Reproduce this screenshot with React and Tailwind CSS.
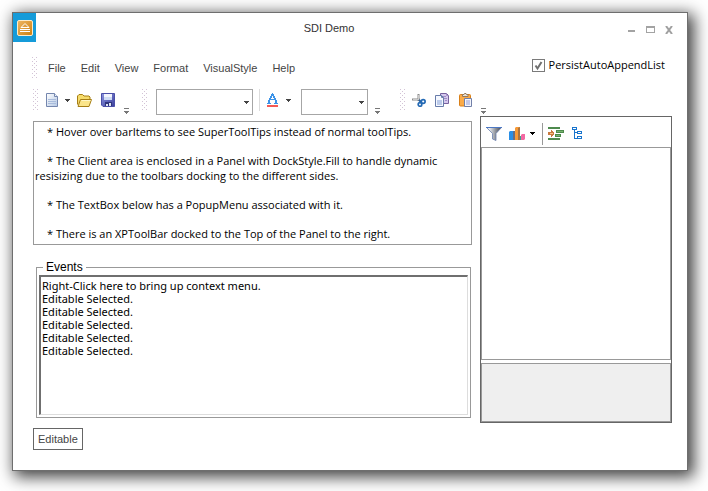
import React from "react";

const body = "font-['Open_Sans','Noto_Sans',sans-serif]";
const eventFont = "font-['Noto_Sans','Open_Sans',sans-serif]";
const menuFont = "font-['Liberation_Sans',Arial,sans-serif]";

function Grip() {
  return (
    <svg className="w-[6px] h-[22px] shrink-0" shapeRendering="crispEdges" aria-hidden="true">
      <defs>
        <pattern id="grip" width="4" height="4" patternUnits="userSpaceOnUse">
          <rect x="0" y="0" width="1" height="1" fill="#d3c3d6" />
          <rect x="2" y="2" width="1" height="1" fill="#d3c3d6" />
        </pattern>
      </defs>
      <rect width="6" height="22" fill="url(#grip)" />
    </svg>
  );
}

function Arrow({ color = "#444" }) {
  return (
    <svg width="5" height="3" viewBox="0 0 5 3" shapeRendering="crispEdges" fill={color} aria-hidden="true">
      <path d="M0 0h5v1H0zM1 1h3v1H1zM2 2h1v1H2z" />
    </svg>
  );
}

function Overflow() {
  return (
    <button type="button" aria-label="Toolbar options" className="self-end shrink-0">
      <svg width="5" height="6" viewBox="0 0 5 6" shapeRendering="crispEdges" fill="#777" className="block" aria-hidden="true">
        <path d="M0 0h5v1H0zM0 3h5v1H0zM1 4h3v1H1zM2 5h1v1H2z" />
      </svg>
    </button>
  );
}

function IconButton({ label, children, className = "" }) {
  return (
    <button type="button" aria-label={label} className={`flex shrink-0 items-center justify-center ${className}`}>
      {children}
    </button>
  );
}

function Combo({ label, className }) {
  return (
    <div className={`grid h-[22px] shrink-0 ${className}`}>
      <select aria-label={label} className="col-start-1 row-start-1 w-full appearance-none border border-[#a6a6a6] bg-white">
        <option></option>
      </select>
      <span className="pointer-events-none col-start-1 row-start-1 mr-1 self-center justify-self-end">
        <Arrow />
      </span>
    </div>
  );
}

const NewIcon = () => (
  <svg width="12" height="14" viewBox="0 0 12 14" aria-hidden="true">
    <defs>
      <linearGradient id="page" x2="1" y2="1">
        <stop offset="0" stopColor="#fff" />
        <stop offset="1" stopColor="#b5c8e4" />
      </linearGradient>
    </defs>
    <path d="M.5.5h8l3 3v10H.5z" fill="url(#page)" stroke="#7486ae" />
    <path d="M8.5.5v3h3" fill="#eef3fb" stroke="#7486ae" />
    <path d="M2 6.500h8M2 8.500h8M2 10.500h8" stroke="#a9bcdc" />
  </svg>
);

const OpenIcon = () => (
  <svg width="15" height="13" viewBox="0 0 15 13" aria-hidden="true">
    <path d="M.5 10.500V2l1.500-1.500h3.500l1.500 1.500h5l1 1v3" fill="#f6dc6c" stroke="#a67e15" />
    <path d="M1 12.500 3.500 5.500H14.500L12 12.500z" fill="#fbe58a" stroke="#a67e15" />
    <path d="M4.500 6.500h9" stroke="#fff7c7" />
  </svg>
);

const SaveIcon = () => (
  <svg width="14" height="14" viewBox="0 0 14 14" aria-hidden="true">
    <defs>
      <linearGradient id="disk" x2="1" y2="1">
        <stop offset="0" stopColor="#8c95e0" />
        <stop offset="1" stopColor="#3b3f9c" />
      </linearGradient>
    </defs>
    <path d="M.5.5h13v13H2L.5 12z" fill="url(#disk)" stroke="#4b4fa8" />
    <path d="M3 1h8v6H3z" fill="#f2f5fd" />
    <path d="M3 4h8v3H3z" fill="#cfdcf5" />
    <path d="M4 9h7v4H4z" fill="#30357c" />
    <path d="M5 11h2v2H5zM8 10h2v3H8z" fill="#dfe6f4" />
  </svg>
);

const CutIcon = () => (
  <svg width="14" height="13" viewBox="0 0 14 13" fill="none" aria-hidden="true">
    <path d="M0 5.500h8M6.500 0v7" stroke="#8b8b8b" strokeWidth="2" />
    <path d="M1 5.500h6M6.500 1v5" stroke="#c9c9c9" />
    <path d="m7 6 2 2" stroke="#235d9f" strokeWidth="2" />
    <circle cx="11.200" cy="7.500" r="1.900" stroke="#2369b4" strokeWidth="1.700" />
    <circle cx="8" cy="10.500" r="1.800" stroke="#2369b4" strokeWidth="1.700" />
  </svg>
);

const CopyIcon = () => (
  <svg width="14" height="14" viewBox="0 0 14 14" aria-hidden="true">
    <path d="M5.500.5h6l2 2v8h-8z" fill="#d5c8ed" stroke="#77619f" />
    <path d="M11.500.5v2h2M7 3.500h4M7 5.500h5M10 7.500h2" fill="none" stroke="#a28dc7" />
    <path d="M.5 2.500h6l2 2v9h-8z" fill="#f5f8ff" stroke="#687caa" />
    <path d="M6.500 2.500v2h2" fill="none" stroke="#687caa" />
    <path d="M2 7h5v5H2z" fill="#bccbea" />
  </svg>
);

const PasteIcon = () => (
  <svg width="13" height="14" viewBox="0 0 13 14" aria-hidden="true">
    <rect x=".5" y="1.500" width="11" height="11.500" rx="1" fill="#fbab48" stroke="#d87f18" />
    <path d="M3.500 3.500v-2h1.500l.5-1h1.500l.5 1H9v2z" fill="#e9e4dc" stroke="#977a58" />
    <path d="M5.500 5.500h7v8h-7z" fill="#f3f5fc" stroke="#7280a8" />
    <path d="M7 7h4v5H7z" fill="#c3c9ea" />
  </svg>
);

const FontIcon = () => (
  <svg width="11" height="14" viewBox="0 0 11 14" shapeRendering="crispEdges" fill="#3c93e8" aria-hidden="true">
    <path d="M5 0h1v1H5zM4 1h3v2H4zM3 3h2v2H3zM6 3h2v2H6zM2 5h2v2H2zM7 5h2v2H7zM3 6h5v1H3zM1 7h2v3H1zM8 7h2v3H8zM0 10h4v1H0zM7 10h4v1H7z" />
    <path d="M0 12h11v2H0z" fill="#f45a55" />
  </svg>
);

const FilterIcon = () => (
  <svg width="16" height="14" viewBox="0 0 16 14" aria-hidden="true">
    <defs>
      <linearGradient id="funnel">
        <stop offset=".2" stopColor="#e9ebef" />
        <stop offset=".6" stopColor="#8f939b" />
        <stop offset="1" stopColor="#45484f" />
      </linearGradient>
    </defs>
    <path d="M.5.5h15L10 6.500v7L6.500 12V6.500z" fill="url(#funnel)" stroke="#6a7fae" strokeWidth=".8" />
    <path d="M0 .5h16" stroke="#4c78c4" />
  </svg>
);

const ChartIcon = () => (
  <svg width="16" height="13" viewBox="0 0 16 13" aria-hidden="true">
    <path d="M0 5 1 4h4v9H0z" fill="#2a8fe6" />
    <path d="M4 4h2v9H4z" fill="#666f86" />
    <path d="M6 1 7 0h4v13H6z" fill="#f79a37" />
    <path d="M9 1l2-1v13H9z" fill="#a87443" />
    <path d="m12 8 1-1h3v5l-1 1h-3z" fill="#f268a2" />
    <path d="M11 9h1v4h-1z" fill="#3fa58c" />
  </svg>
);

const IndentIcon = () => (
  <svg width="16" height="13" viewBox="0 0 16 13" shapeRendering="crispEdges" aria-hidden="true">
    <path d="M0 0h12v2H0zM0 11h12v2H0zM8 3h8v3H8zM7 7h6v3H7z" fill="#4d8a4d" />
    <path d="M9 4h6v1H9zM8 8h4v1H8z" fill="#79b56e" />
    <path d="M0 5h3V3l3 3v1L3 10V8H0z" fill="#c9793f" />
    <path d="M2 6h3v1H2z" fill="#f7c58a" />
  </svg>
);

const TreeIcon = () => (
  <svg width="10" height="13" viewBox="0 0 10 13" fill="none" stroke="#1874cd" shapeRendering="crispEdges" aria-hidden="true">
    <path d="M.5.5h4v2h-4zM2.500 3v8.500H5M2.500 5.500H5M5.500 4.500h4v2h-4zM5.500 9.500h4v2h-4z" />
  </svg>
);

const menus = ["File", "Edit", "View", "Format", "VisualStyle", "Help"];

const events = [
  "Right-Click here to bring up context menu.",
  "Editable Selected.",
  "Editable Selected.",
  "Editable Selected.",
  "Editable Selected.",
  "Editable Selected.",
].join("\n");

function TitleBar() {
  return (
    <header className="flex h-[29px] items-stretch">
      <div className="flex w-[23px] items-center justify-center bg-[#159bd9]">
        <svg width="16" height="16" viewBox="0 0 16 16" aria-hidden="true">
          <defs>
            <linearGradient id="app" x2="1" y2="1">
              <stop offset="0" stopColor="#efb765" />
              <stop offset="1" stopColor="#cc7e0e" />
            </linearGradient>
          </defs>
          <rect x=".5" y=".5" width="15" height="15" rx="1.500" fill="url(#app)" stroke="#fdeccb" />
          <path d="M8 3.500 4 7.500h8z" fill="none" stroke="#fff" />
          <path d="M3 9.500h10M3 11.500h10" stroke="#fff" />
        </svg>
      </div>
      <h1 className={`flex-1 pr-[6px] pt-[7px] text-center text-[11px] leading-4 text-[#333] ${menuFont}`}>SDI Demo</h1>
      <div className="flex items-center gap-[10px] pr-[14px] pt-1">
        <IconButton label="Minimize">
          <svg width="8" height="8" shapeRendering="crispEdges" aria-hidden="true"><path d="M0 4h7v2H0z" fill="#a3a3a3" /></svg>
        </IconButton>
        <IconButton label="Maximize">
          <svg width="9" height="7" shapeRendering="crispEdges" aria-hidden="true"><path d="M0 0h9v7H0zM1 2v4h7V2z" fillRule="evenodd" fill="#a3a3a3" /></svg>
        </IconButton>
        <IconButton label="Close">
          <svg width="8" height="8" viewBox="0 0 8 8" aria-hidden="true"><path d="m1 0 6 8M7 0 1 8" stroke="#a0a0a0" strokeWidth="2" /></svg>
        </IconButton>
      </div>
    </header>
  );
}

export default function App() {
  return (
    <div className="flex min-h-screen flex-col bg-white pb-5 pl-3 pr-5 pt-3">
      <div className="flex flex-1 flex-col border border-[#6e6e6e] bg-white shadow-[4px_4px_15px_2px_rgba(0,0,0,0.75)]">
        <TitleBar />

        <div className="mt-[15px] flex h-[22px] items-center justify-between pl-[19px] pr-[22px]">
          <nav className={`flex items-center text-[11px] leading-4 text-[#444] ${menuFont}`}>
            <Grip />
            <div className="ml-[10px] flex gap-[15px]">
              {menus.map((m) => (
                <button key={m} type="button">{m}</button>
              ))}
            </div>
          </nav>
          <label className={`-mt-[6px] flex items-center gap-1 text-[11px] leading-4 text-black ${body}`}>
            <span className="grid">
              <input type="checkbox" defaultChecked className="peer col-start-1 row-start-1 size-[13px] appearance-none border border-[#7a7a7a] bg-white" />
              <svg width="13" height="13" viewBox="0 0 13 13" className="pointer-events-none invisible col-start-1 row-start-1 peer-checked:visible" fill="none" stroke="#707070" strokeWidth="2" aria-hidden="true">
                <path d="m3.500 6.500 2 3 4-6.500" />
              </svg>
            </span>
            PersistAutoAppendList
          </label>
        </div>

        <div className="mt-[10px] flex h-[25px] items-start pl-[20px]" role="toolbar" aria-label="Main toolbar">
          <div className="flex h-[25px]">
            <div className="flex h-[22px] items-center">
              <Grip />
              <IconButton label="New" className="ml-[7px]"><NewIcon /></IconButton>
              <IconButton label="New options" className="ml-[7px]"><Arrow /></IconButton>
              <IconButton label="Open" className="ml-[7px]"><OpenIcon /></IconButton>
              <IconButton label="Save" className="ml-[9px] mr-[9px]"><SaveIcon /></IconButton>
            </div>
            <Overflow />
          </div>
          <div className="ml-[13px] flex h-[25px]">
            <div className="flex h-[22px] items-center">
              <Grip />
              <Combo label="Font family" className="ml-[8px] w-[97px]" />
              <span className="ml-[6px] h-[22px] w-px bg-[#dcdcdc]" />
              <IconButton label="Font color" className="ml-[7px]"><FontIcon /></IconButton>
              <IconButton label="Font color options" className="ml-[8px]"><Arrow /></IconButton>
              <Combo label="Font size" className="ml-[10px] mr-[7px] w-[67px]" />
            </div>
            <Overflow />
          </div>
          <div className="ml-[20px] flex h-[25px]">
            <div className="flex h-[22px] items-center">
              <Grip />
              <IconButton label="Cut" className="ml-[6px]"><CutIcon /></IconButton>
              <IconButton label="Copy" className="ml-[9px]"><CopyIcon /></IconButton>
              <IconButton label="Paste" className="ml-[10px] mr-[9px]"><PasteIcon /></IconButton>
            </div>
            <Overflow />
          </div>
        </div>

        <main className="mt-[2px] flex flex-1 items-stretch gap-2 pl-5 pr-[15px]">
          <div className="flex min-w-0 flex-1 flex-col pt-[5px]">
            <div className={`flex h-[124px] flex-col gap-[14px] border border-[#999] pl-px pr-5 pt-[2px] text-[11px] leading-[15px] text-black ${body}`}>
              <p className="indent-3">* Hover over barItems to see SuperToolTips instead of normal toolTips.</p>
              <p className="indent-3">* The Client area is enclosed in a Panel with DockStyle.Fill to handle dynamic resisizing due to the toolbars docking to the different sides.</p>
              <p className="indent-3">* The TextBox below has a PopupMenu associated with it.</p>
              <p className="indent-3">* There is an XPToolBar docked to the Top of the Panel to the right.</p>
            </div>
            <fieldset className="ml-[3px] mr-px mt-[14px] mb-[5px] flex flex-1 flex-col border border-[#999] px-[2px] pb-[2px]">
              <legend className="ml-1 px-[3px] font-['Liberation_Sans',Arial,sans-serif] text-[12px] leading-4 text-black">
                <label htmlFor="events">Events</label>
              </legend>
              <textarea
                id="events"
                defaultValue={events}
                className={`h-[140px] w-full flex-1 resize-none border-b border-l-2 border-r border-t-2 border-b-[#ddd] border-l-[#6f6f6f] border-r-[#ddd] border-t-[#6f6f6f] bg-white px-px py-[2px] text-[11px] leading-[13px] text-black outline-none ${eventFont}`}
              />
            </fieldset>
          </div>

          <section className="flex w-[192px] shrink-0 flex-col border border-[#666]">
            <div className="flex h-[30px] items-center pl-[5px] pt-[3px]" role="toolbar" aria-label="Panel toolbar">
              <IconButton label="Filter"><FilterIcon /></IconButton>
              <IconButton label="Chart" className="ml-[7px]"><ChartIcon /></IconButton>
              <IconButton label="Chart options" className="ml-[5px]"><Arrow color="#000" /></IconButton>
              <span className="ml-[7px] h-[22px] w-px bg-[#999]" />
              <IconButton label="Indent" className="ml-[5px]"><IndentIcon /></IconButton>
              <IconButton label="Tree view" className="ml-[8px]"><TreeIcon /></IconButton>
            </div>
            <div className="flex-1 border border-[#999]" />
            <div className="mt-[3px] h-[59px] border border-[#999] bg-[#efefef]" />
          </section>
        </main>

        <footer className="mb-5 mt-[5px] flex pl-5">
          <button type="button" className={`h-[22px] border border-[#666] px-1 text-[11px] leading-4 text-[#444] ${menuFont}`}>
            Editable
          </button>
        </footer>
      </div>
    </div>
  );
}
